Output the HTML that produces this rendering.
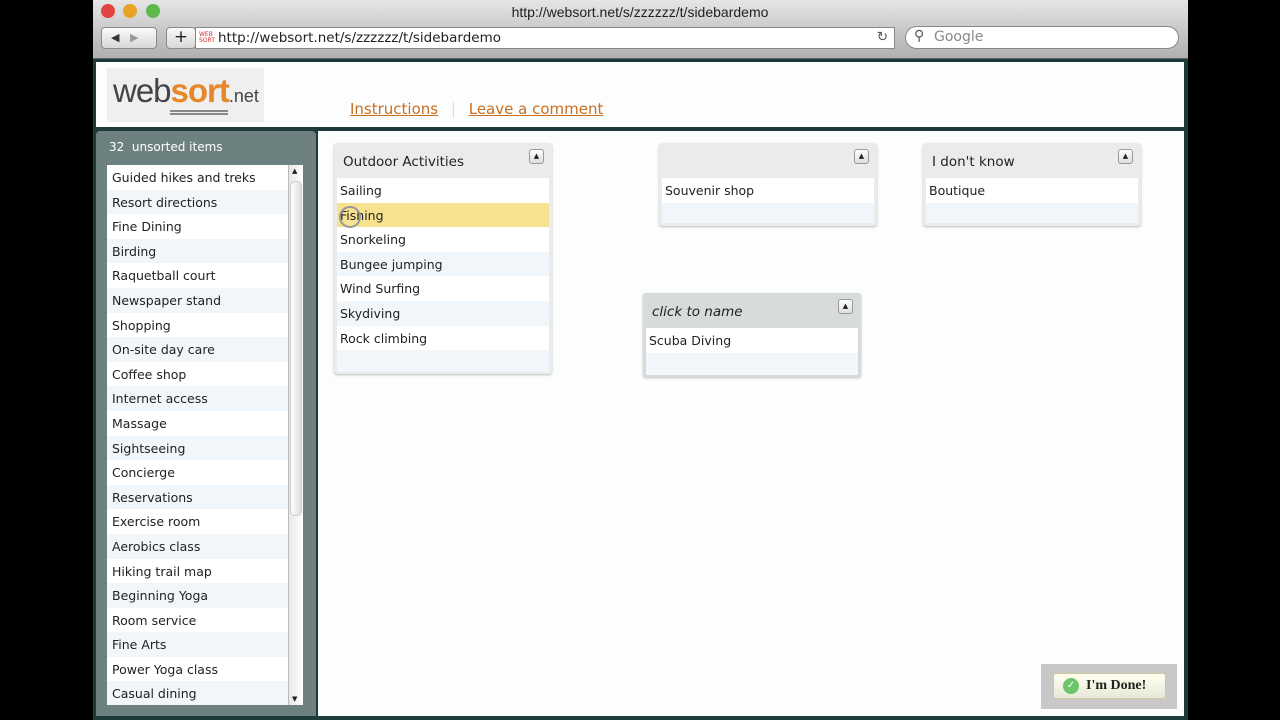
<!DOCTYPE html>
<html><head><meta charset="utf-8"><style>
*{margin:0;padding:0;box-sizing:border-box}
body{width:1280px;height:720px;background:#000;position:relative;overflow:hidden;font-family:"DejaVu Sans","Liberation Sans",sans-serif;font-size:12px;color:#222}
.abs{position:absolute}
.win{left:93px;top:0;width:1095px;height:720px;background:#1f3b39}
.chrome{left:93px;top:0;width:1095px;height:59px;background:linear-gradient(#e6e6e6,#c4c4c4 60%,#b0b0b0);border-bottom:1px solid #666}
.dot{width:14px;height:14px;border-radius:50%;top:4px}
.title{left:0;width:1280px;top:4px;text-align:center;font-size:14px;color:#222;font-family:"Liberation Sans",sans-serif}
.btn{background:linear-gradient(#fafafa,#d8d8d8);border:1px solid #8a8a8a;border-radius:4px}
.url{left:195px;top:27px;width:700px;height:22px;background:#fff;border:1px solid #888;font-size:13.5px;padding:2px 0 0 22px;font-family:"DejaVu Sans",sans-serif}
.search{left:905px;top:26px;width:274px;height:23px;background:#fff;border:1px solid #888;border-radius:12px;font-size:14px;color:#888;padding:2px 0 0 28px}
.header{left:96px;top:62px;width:1088px;height:65px;background:#fcfdfd}
.side{left:96px;top:131px;width:220px;height:585px;background:#6d8181;border-radius:4px 4px 0 0}
.main{left:318px;top:131px;width:866px;height:585px;background:#fcfdfd}
.list{left:107px;top:165px;width:181px;height:540px;background:#fff;overflow:hidden}
.list div{height:24.6px;line-height:26px;padding-left:5px;font-size:12.5px}
.list div:nth-child(even){background:#f0f6fa}
.sb{left:288px;top:165px;width:15px;height:540px;background:linear-gradient(90deg,#e8e8e8,#fff);border-left:1px solid #bbb}
.box{background:#ebebeb;border-radius:3px;box-shadow:0 1px 2px #bbb}
.box h3{font-weight:normal;font-size:13.5px;height:35px;line-height:38px;padding-left:9px}
.box .it{background:#fff;height:24.6px;line-height:25px;padding-left:3px;font-size:12.5px;margin:0 3px}
.box .it.alt{background:#f0f6fa}
.tog{position:absolute;right:8px;top:6px;width:15px;height:15px;border:1px solid #999;border-radius:3px;background:linear-gradient(#fff,#ddd);font-size:7px;text-align:center;line-height:13px}
a{color:#c96f1f;text-decoration:underline}
</style></head><body>
<div class="abs win"></div>
<div class="abs chrome"></div>
<div class="abs dot" style="left:101px;background:#e0443e"></div>
<div class="abs dot" style="left:123px;background:#e9a324"></div>
<div class="abs dot" style="left:146px;background:#5fb94a"></div>
<div class="abs title">http://websort.net/s/zzzzzz/t/sidebardemo</div>
<div class="abs btn" style="left:101px;top:27px;width:56px;height:22px;font-size:11px;color:#333;padding:3px 0 0 9px">◀ &nbsp; <span style="color:#999">▶</span></div>
<div class="abs btn" style="left:166px;top:27px;width:30px;height:22px;font-size:17px;text-align:center;line-height:19px">+</div>
<div class="abs url"><span style="position:absolute;left:3px;top:4px;font-size:6px;color:#c33;line-height:6px">WEB<br>SORT</span>http://websort.net/s/zzzzzz/t/sidebardemo<span style="position:absolute;right:6px;top:1px;color:#555">↻</span></div>
<div class="abs search"><span style="position:absolute;left:8px;top:1px;color:#555">⚲</span>Google</div>
<div class="abs header"></div>
<div class="abs" style="left:107px;top:68px;width:157px;height:54px;background:#efefef"></div>
<div class="abs" style="left:113px;top:72px;font-family:'Liberation Sans',sans-serif;font-size:33px;color:#444;letter-spacing:-1px">web<span style="color:#e8862a;font-weight:bold">sort</span><span style="font-size:18px;letter-spacing:0">.net</span></div>
<div class="abs" style="left:112px;top:110px;width:120px;height:5px;border-top:2px solid #888;border-bottom:2px solid #888;left:170px;width:58px"></div>
<div class="abs" style="left:350px;top:100px;font-size:15px"><a>Instructions</a> <span style="color:#ddd;margin:0 8px">|</span> <a>Leave a comment</a></div>
<div class="abs side"></div>
<div class="abs main"></div>
<div class="abs" style="left:109px;top:140px;color:#fff;font-size:12px">32 &nbsp;unsorted items</div>
<div class="abs list">
<div>Guided hikes and treks</div><div>Resort directions</div><div>Fine Dining</div><div>Birding</div><div>Raquetball court</div><div>Newspaper stand</div><div>Shopping</div><div>On-site day care</div><div>Coffee shop</div><div>Internet access</div><div>Massage</div><div>Sightseeing</div><div>Concierge</div><div>Reservations</div><div>Exercise room</div><div>Aerobics class</div><div>Hiking trail map</div><div>Beginning Yoga</div><div>Room service</div><div>Fine Arts</div><div>Power Yoga class</div><div>Casual dining</div>
</div>
<div class="abs sb"><div style="position:absolute;top:2px;left:3px;font-size:7px">▲</div><div style="position:absolute;bottom:2px;left:3px;font-size:7px">▼</div><div style="position:absolute;top:16px;left:1px;width:12px;height:335px;background:linear-gradient(90deg,#fff,#ddd);border:1px solid #ccc;border-radius:5px"></div></div>

<div class="abs box" style="left:334px;top:143px;width:218px;height:231px"><h3>Outdoor Activities</h3><div class="tog">▲</div>
<div class="it">Sailing</div><div class="it" style="background:#f7e38f">Fishing</div><div class="it">Snorkeling</div><div class="it alt">Bungee jumping</div><div class="it">Wind Surfing</div><div class="it alt">Skydiving</div><div class="it">Rock climbing</div><div class="it alt" style="height:22px"></div></div>
<div class="abs" style="left:339px;top:206px;width:22px;height:22px;border:2px solid #999;border-radius:50%"></div>
<div class="abs box" style="left:659px;top:143px;width:218px;height:83px"><h3>&nbsp;</h3><div class="tog">▲</div><div class="it">Souvenir shop</div><div class="it alt" style="height:20px"></div></div>
<div class="abs box" style="left:923px;top:143px;width:218px;height:83px"><h3>I don't know</h3><div class="tog">▲</div><div class="it">Boutique</div><div class="it alt" style="height:20px"></div></div>
<div class="abs box" style="left:643px;top:293px;width:218px;height:84px;background:#d7dbdb"><h3 style="font-style:italic">click to name</h3><div class="tog">▲</div><div class="it">Scuba Diving</div><div class="it alt" style="height:22px"></div></div>

<div class="abs" style="left:1041px;top:664px;width:136px;height:45px;background:#c8c8c8"></div>
<div class="abs" style="left:1053px;top:673px;width:113px;height:26px;background:linear-gradient(#fffff0,#e8e8d8);border:1px solid #cfc69a;border-radius:3px;font-family:'Liberation Serif',serif;font-weight:bold;font-size:14px;line-height:24px;padding-left:32px">I'm Done!</div>
<div class="abs" style="left:1063px;top:678px;width:16px;height:16px;border-radius:50%;background:#6cc46b;color:#fff;font-size:10px;text-align:center;line-height:16px">✓</div>
</body></html>
